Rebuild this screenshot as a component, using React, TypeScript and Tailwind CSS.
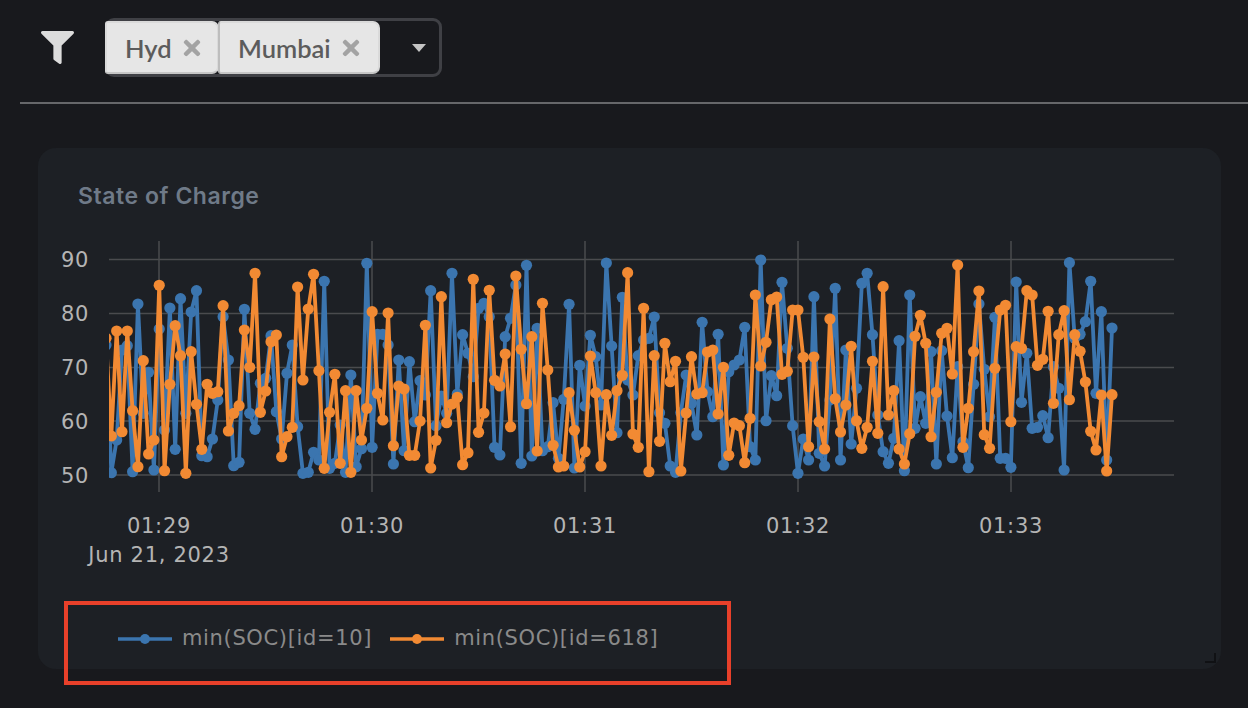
import React from "react";
import { FaFilter, FaTimes } from "react-icons/fa";

const orange = [295,588,273,575,273,512,680,362,642,600,136,692,433,257,347,700,335,493,628,433,460,455,197,573,520,497,270,382,100,517,453,305,285,650,590,562,141,420,207,103,392,685,517,403,
670,452,697,452,600,505,215,460,540,219,617,438,447,646,646,543,256,684,601,170,548,492,472,674,638,118,577,519,151,421,438,342,560,108,328,491,290,633,190,390,616,681,678,458,571,681,635,348,458,678,464,586,452,406,98,
582,622,205,695,347,604,310,425,364,693,519,350,462,458,336,330,522,382,646,549,557,668,535,165,378,307,179,171,403,394,210,210,352,620,351,545,627,237,476,576,495,319,542,625,562,364,580,140,525,452,
627,672,581,289,226,310,590,457,280,265,402,75,622,505,335,153,584,625,385,210,196,545,320,325,152,165,376,358,214,490,284,212,479,284,334,426,574,630,465,693,464];

const blue = [315,698,600,330,317,695,192,520,397,690,267,570,204,628,176,520,216,152,647,650,597,480,230,360,677,667,208,520,568,430,415,287,515,597,400,315,560,700,697,637,660,124,685,670,
555,697,405,680,626,70,622,283,283,315,672,360,632,365,545,422,465,152,557,468,520,100,462,284,340,410,205,190,230,622,645,290,235,135,670,76,648,265,632,620,488,655,478,193,684,376,498,286,350,495,69,318,578,172,420,
465,347,300,295,231,518,550,678,697,518,405,490,585,247,455,530,283,675,395,375,360,262,620,660,60,542,407,467,127,325,557,700,597,660,170,640,678,480,145,660,330,612,445,130,100,284,525,635,670,595,
302,692,165,565,470,550,335,672,332,528,653,380,605,683,433,192,388,530,232,655,655,682,126,487,340,565,562,527,593,380,445,690,68,295,283,245,124,460,215,660,264];

const toPts = (a: number[]) =>
  a.map((v, i) => [106 + (i * (1112 - 106)) / (a.length - 1), 240 + v / 3] as const);

function Series({ data, color }: { data: number[]; color: string }) {
  const pts = toPts(data);
  return (
    <g>
      <polyline points={pts.map((p) => p.join(",")).join(" ")} fill="none" stroke={color} strokeWidth={3.8} strokeLinejoin="round" />
      {pts.map((p, i) => (
        <circle key={i} cx={p[0]} cy={p[1]} r={5.6} fill={color} />
      ))}
    </g>
  );
}

const BLUE = "#3b75af";
const ORANGE = "#f28a33";
const GRID = "#4a4b4e";
const TICK = "#b4b4b4";
const ys = [[90, 259.5], [80, 313.5], [70, 367.5], [60, 421], [50, 475]] as const;
const xs = [[159, "01:29"], [372, "01:30"], [585, "01:31"], [798, "01:32"], [1011, "01:33"]] as const;

function Chip({ label, className }: { label: string; className: string }) {
  return (
    <div className={`flex h-[53px] items-center bg-[#e6e6e6] border-2 border-[#dadada] border-b-[#c6c6c6] text-[#5c5c5c] text-[25.5px] font-['Lato',sans-serif] font-semibold ${className}`}>
      <span className="mt-[1px]">{label}</span>
      <FaTimes className="text-[#a3a3a3] ml-[8px]" size={24} />
    </div>
  );
}

function LegendItem({ color, label }: { color: string; label: string }) {
  return (
    <div className="flex items-center gap-[10px]">
      <svg width="54" height="14" viewBox="0 0 54 14">
        <line x1="0" y1="7" x2="54" y2="7" stroke={color} strokeWidth="3.4" />
        <circle cx="27" cy="7" r="5" fill={color} />
      </svg>
      <span className="text-[#8a8a8a] text-[21px] tracking-[0.65px] leading-none">{label}</span>
    </div>
  );
}

export default function App() {
  return (
    <div className="relative w-[1248px] h-[708px] overflow-hidden bg-[#18191d] font-['DejaVu_Sans',sans-serif]">
      <header className="ml-[20px] h-[104px] border-b-2 border-[#66676a] flex items-start">
        <FaFilter className="ml-[21px] mt-[31px] text-[#dcdcdc]" size={33} />
        <div className="ml-[31px] mt-[18px] w-[337px] h-[59px] flex items-start border-[3px] border-[#3f4045] rounded-[9px]">
          <Chip label="Hyd" className="-ml-[3px] w-[114px] pl-[18px] rounded-r-[7px] rounded-l-[3px]" />
          <Chip label="Mumbai" className="-ml-[1px] w-[162px] pl-[18px] rounded-r-[7px] rounded-l-[3px] border-l-[#bdbdbd]" />
          <svg className="ml-[32px] mt-[23px]" width="14" height="8" viewBox="0 0 14 8">
            <polygon points="0,0 14,0 7,8" fill="#c4c4c4" />
          </svg>
        </div>
      </header>

      <section className="relative ml-[38px] mt-[44px] w-[1183px] h-[521px] rounded-[18px] bg-[#1d2025]">
        <h2 className="pl-[40px] pt-[34px] h-[82px] text-[23px] tracking-[0.55px] leading-[28px] font-semibold text-[#6f7a88] font-['Inter',sans-serif]">
          State of Charge
        </h2>
        <svg className="block" width="1183" height="340" viewBox="38 230 1183 340">
          <defs>
            <clipPath id="plot">
              <rect x="109" y="230" width="1070" height="262" />
            </clipPath>
          </defs>
          {ys.map(([, y]) => (
            <line key={y} x1="109" x2="1174" y1={y} y2={y} stroke={GRID} strokeWidth="1.5" />
          ))}
          {xs.map(([x]) => (
            <line key={x} x1={x} x2={x} y1="241" y2="492" stroke={GRID} strokeWidth="1.5" />
          ))}
          <g clipPath="url(#plot)">
            <Series data={blue} color={BLUE} />
            <Series data={orange} color={ORANGE} />
          </g>
          {ys.map(([v, y]) => (
            <text key={v} x="89" y={y + 7.5} textAnchor="end" fill={TICK} fontSize="21" letterSpacing="0.7">{v}</text>
          ))}
          {xs.map(([x, t]) => (
            <text key={x} x={x} y="533" textAnchor="middle" fill={TICK} fontSize="21" letterSpacing="0.7">{t}</text>
          ))}
          <text x="159" y="562" textAnchor="middle" fill={TICK} fontSize="21" letterSpacing="0.7">Jun 21, 2023</text>
        </svg>
        <div className="flex items-center gap-[18px] pl-[80px] pt-[58px]">
          <LegendItem color={BLUE} label="min(SOC)[id=10]" />
          <LegendItem color={ORANGE} label="min(SOC)[id=618]" />
        </div>
        <div className="absolute left-[1167px] top-[505px] w-[11px] h-[10px] border-r-2 border-b-2 border-[#101114]" />
      </section>

      <div className="absolute left-[64px] top-[601px] w-[667px] h-[84px] border-4 border-[#e8402a]" />
    </div>
  );
}
